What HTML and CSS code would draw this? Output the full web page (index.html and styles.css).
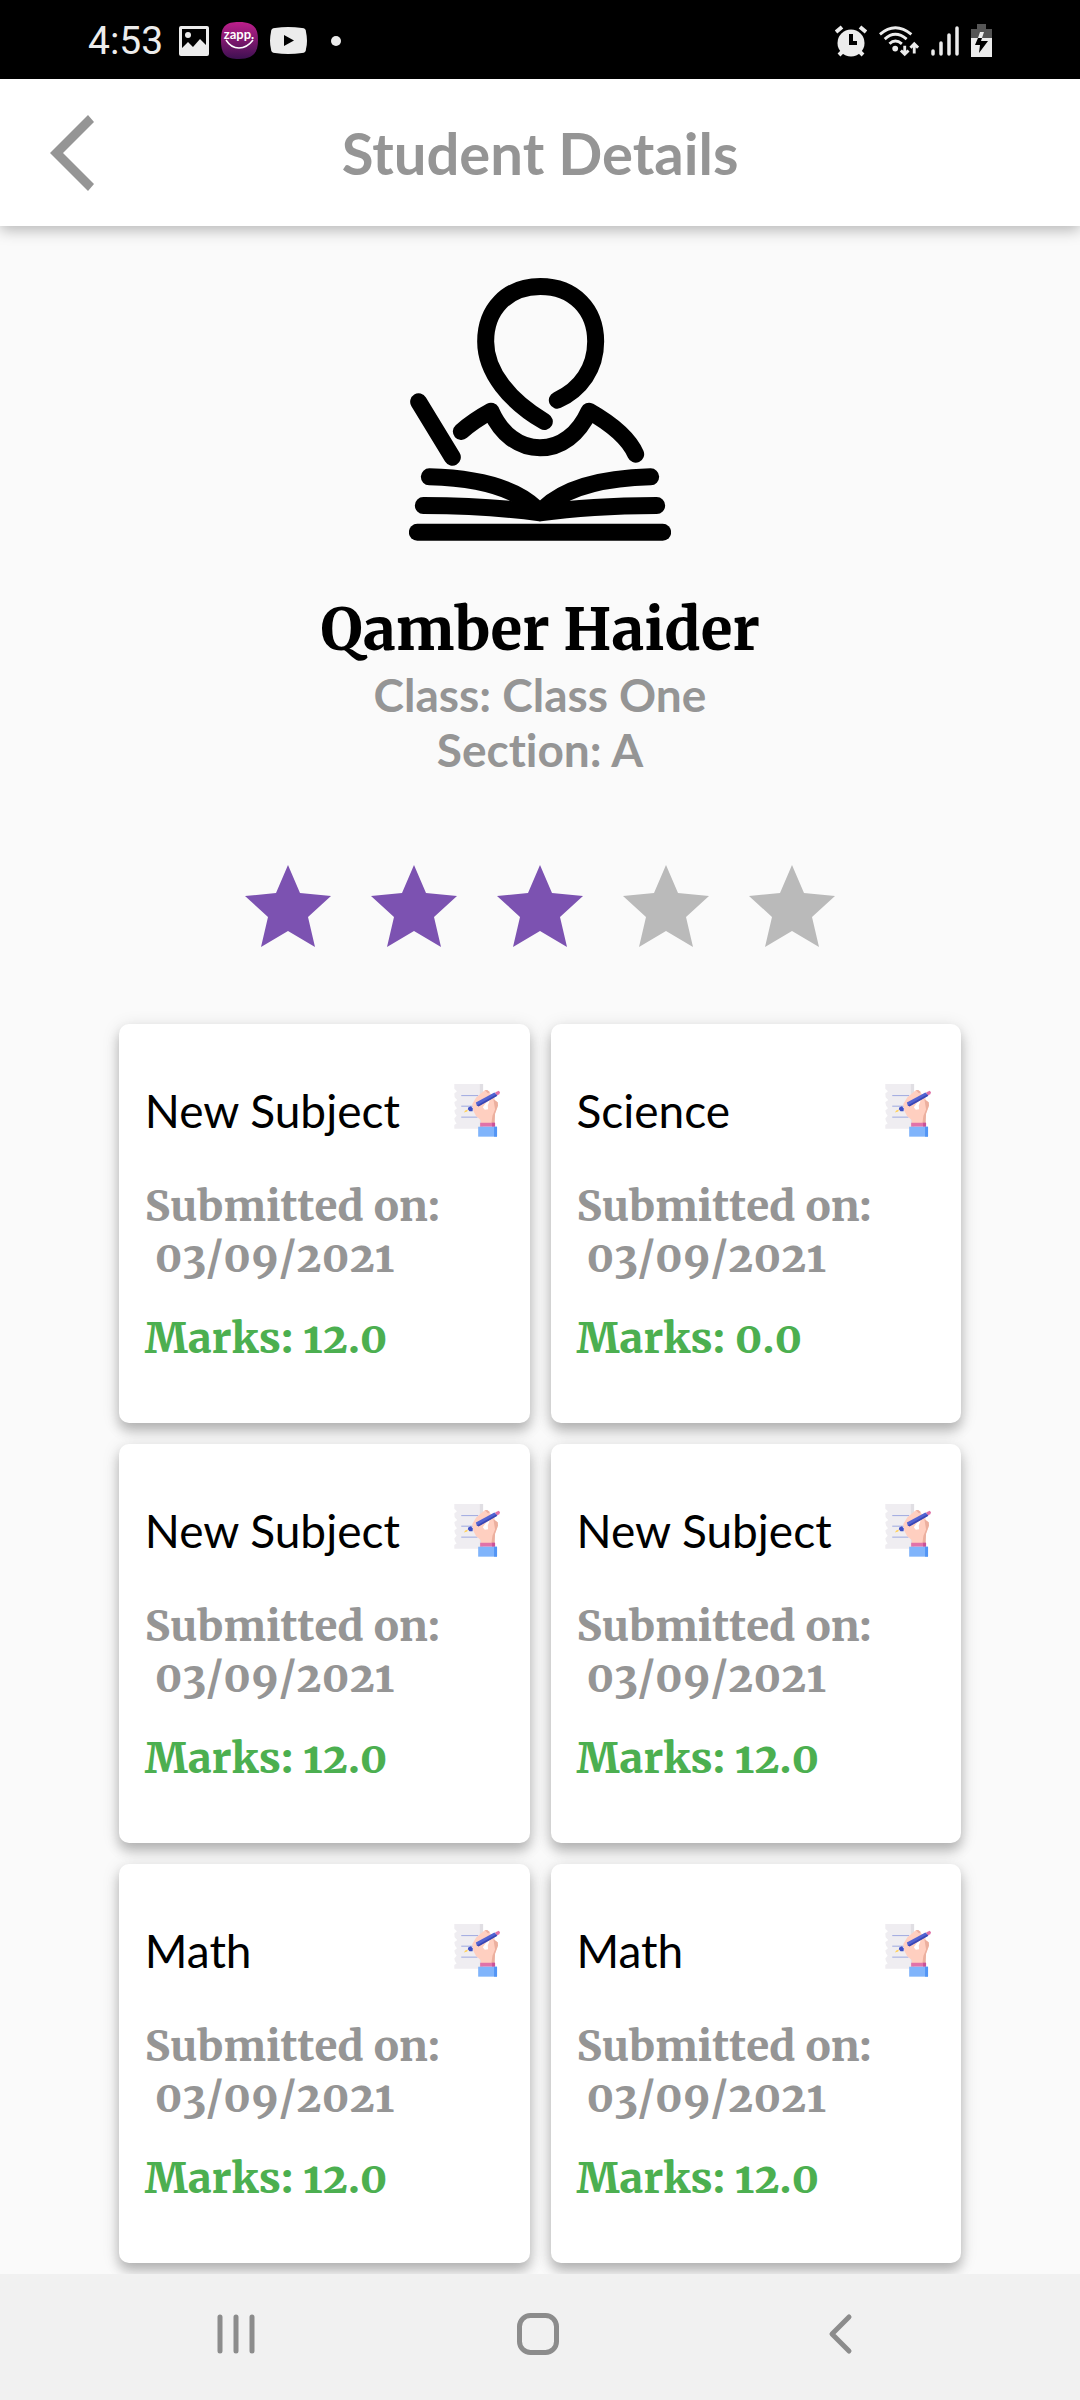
FILE: index.html
```html
<!DOCTYPE html>
<html lang="en">
<head>
<meta charset="utf-8">
<meta name="viewport" content="width=device-width, initial-scale=1">
<title>Student Details</title>
<link rel="stylesheet" href="styles.css">
</head>
<body>
<svg class="defs" width="0" height="0" aria-hidden="true">
  <symbol id="star" viewBox="0 0 86 82">
    <path d="M43 0 55 28 86 31 63 52 70 82 43 66 16 82 23 52 0 31 31 28Z"/>
  </symbol>
  <symbol id="writing" viewBox="32 42 160 160">
    <path fill="#efedf1" d="M42 42H120V177H42V166L49 161 44 154 42 146 49 138 44 130 42 122 50 115 44 107 42 97 51 90 43 82 42 71 50 64 42 56Z"/>
    <path fill="#e0dee3" d="M119 42H129V177H119Z"/>
    <path stroke="#9da8e0" stroke-width="3" d="M63 77H114M63 109H106M63 142H112"/>
    <path fill="#ffcfc0" d="M96 103 108 83 134 61 141 60 149 66 150 71 162 76 164 90 173 98 172 112 164 133 159 160H122V151L108 139 99 122Z"/>
    <path fill="#ecb09f" d="M134 61 141 60 149 66 144 71ZM160 88 173 97 174 107 165 132 164 160H154L157 138 165 119Z"/>
    <path fill="#fff" d="M137 99 149 91 143 107 144 118 134 120 128 112Z"/>
    <path fill="#5263d2" d="M107 98 163 68 171 74 172 77 115 109 110 108Z"/>
    <path fill="#3b47b3" d="M111 106 169 74 171 78 115 110Z"/>
    <path fill="#df73a8" d="M165 68 176 62 180 67 178 73 171 76Z"/>
    <path fill="#3d4fc6" d="M84 113 92 109 98 116 97 124 88 124 83 118Z"/>
    <path fill="#ffd15c" d="M71 128 75 122 83 119 81 125Z"/>
    <path fill="#e172a9" d="M120 159H165V171H120Z"/>
    <path fill="#c95298" d="M156 159H165V171H156Z"/>
    <path fill="#80b4fb" d="M114 171H171V201H114Z"/>
    <path fill="#5295f5" d="M162 171H171V201H162Z"/>
  </symbol>
</svg>

<div class="status-bar">
  <div class="status-left">
    <span class="clock">4:53</span>
    <svg class="icon-photo" viewBox="0 0 30 30" aria-hidden="true">
      <path fill="#ececec" fill-rule="evenodd" d="M2 0H28Q30 0 30 2V28Q30 30 28 30H2Q0 30 0 28V2Q0 0 2 0ZM3 3V22L9 16 14 21 21 13 27 19V3Z"/>
      <circle cx="9" cy="9" r="3" fill="#ececec"/>
    </svg>
    <svg class="icon-zapp" viewBox="0 0 37 37" aria-label="zapp" role="img">
      <defs>
        <linearGradient id="zapp-bg" x1="0" y1="0" x2="0" y2="1">
          <stop offset="0" stop-color="#bd1f8b"/>
          <stop offset="1" stop-color="#3d1051"/>
        </linearGradient>
      </defs>
      <path fill="url(#zapp-bg)" d="M18 0C32 0 37 5 37 18S32 37 18 37 0 32 0 18 5 0 18 0Z"/>
      <text class="zapp-text" x="18" y="17" text-anchor="middle">zapp.</text>
      <path fill="none" stroke="#fff" stroke-width="1.5" d="M5 18Q10 26 18 26T32 18"/>
    </svg>
    <svg class="icon-video" viewBox="0 0 37 27" aria-hidden="true">
      <path fill="#ececec" fill-rule="evenodd" d="M5 1Q18 -1 32 1 36 1 36 5 38 14 36 22 36 26 32 26 18 28 5 26 1 26 1 22-1 14 1 5 1 1 5 1ZM14 8V19L24 13.500Z"/>
    </svg>
    <span class="more-dot"></span>
  </div>
  <div class="status-right">
    <svg class="icon-alarm" viewBox="0 0 32 32" aria-hidden="true">
      <circle cx="16" cy="18" r="13.500" fill="#ececec"/>
      <path stroke="#ececec" stroke-width="4" d="M1 7 7 2M31 7 25 2M4 30 9 25M28 30 23 25"/>
      <path fill="none" stroke="#000" stroke-width="4" d="M16 9V18H22"/>
    </svg>
    <svg class="icon-wifi" viewBox="0 0 42 32" aria-hidden="true">
      <g fill="none" stroke="#ececec" stroke-width="3">
        <path d="M1 9Q17-5 34 9M6 14Q17 4 29 14M11 19Q17 13 24 19"/>
        <path d="M27 21V30M23 26 27 30 31 26M37 29V19M33 23 37 19 41 23"/>
      </g>
      <circle cx="17" cy="24" r="3" fill="#ececec"/>
    </svg>
    <svg class="icon-signal" viewBox="0 0 28 30" aria-hidden="true">
      <path stroke="#ececec" stroke-width="3.500" stroke-linecap="round" d="M2 25V28M10 17V28M18 9V28M26 2V28"/>
    </svg>
    <svg class="icon-battery" viewBox="0 0 21 33" aria-hidden="true">
      <path fill="#555" d="M6 0H15V5H21V14H0V5H6Z"/>
      <path fill="#ececec" d="M0 14H21V33H0ZM9 8H13L11 14H7Z"/>
      <path fill="#000" d="M7 14H11L10 17H17L8 29 9 21H4Z"/>
    </svg>
  </div>
</div>

<header class="app-bar">
  <button class="back" type="button" aria-label="Back">
    <svg viewBox="0 0 44 76" aria-hidden="true"><path d="M0 38 38 0 44 7 13 38 44 69 38 76Z"/></svg>
  </button>
  <h1 class="app-title">Student Details</h1>
</header>

<main class="content">
  <section class="profile">
    <svg class="avatar" viewBox="57 55 786 788" aria-hidden="true">
      <g fill="none" stroke="#000" stroke-width="51" stroke-linecap="round">
        <path d="M463 485C360 425 287 337 287 245 287 150 350 80 451 80S617 150 617 245C617 325 573 388 502 421"/>
        <path stroke-linejoin="round" d="M214 515Q250 483 303 454C334 523 387 564 450 564S566 523 597 454Q708 517 737 583"/>
        <path d="M86 426 187 592"/>
        <path d="M118 651Q346 657 439 746M782 651Q554 657 461 746"/>
        <path d="M100 737Q300 738 450 759 600 738 800 737"/>
        <path d="M82 817H818"/>
      </g>
    </svg>
    <h2 class="name">Qamber Haider</h2>
    <p class="meta">Class: Class One</p>
    <p class="meta">Section: A</p>
    <div class="rating" role="img" aria-label="3 out of 5 stars">
      <svg class="star star-on"><use href="#star"/></svg>
      <svg class="star star-on"><use href="#star"/></svg>
      <svg class="star star-on"><use href="#star"/></svg>
      <svg class="star"><use href="#star"/></svg>
      <svg class="star"><use href="#star"/></svg>
    </div>
  </section>

  <section class="cards" aria-label="Submissions">
    <article class="card">
      <div class="card-head"><h3 class="subject">New Subject</h3><svg class="card-icon" aria-hidden="true"><use href="#writing"/></svg></div>
      <p class="submitted">Submitted on:<br>&nbsp;03/09/2021</p>
      <p class="marks">Marks: 12.0</p>
    </article>
    <article class="card">
      <div class="card-head"><h3 class="subject">Science</h3><svg class="card-icon" aria-hidden="true"><use href="#writing"/></svg></div>
      <p class="submitted">Submitted on:<br>&nbsp;03/09/2021</p>
      <p class="marks">Marks: 0.0</p>
    </article>
    <article class="card">
      <div class="card-head"><h3 class="subject">New Subject</h3><svg class="card-icon" aria-hidden="true"><use href="#writing"/></svg></div>
      <p class="submitted">Submitted on:<br>&nbsp;03/09/2021</p>
      <p class="marks">Marks: 12.0</p>
    </article>
    <article class="card">
      <div class="card-head"><h3 class="subject">New Subject</h3><svg class="card-icon" aria-hidden="true"><use href="#writing"/></svg></div>
      <p class="submitted">Submitted on:<br>&nbsp;03/09/2021</p>
      <p class="marks">Marks: 12.0</p>
    </article>
    <article class="card">
      <div class="card-head"><h3 class="subject">Math</h3><svg class="card-icon" aria-hidden="true"><use href="#writing"/></svg></div>
      <p class="submitted">Submitted on:<br>&nbsp;03/09/2021</p>
      <p class="marks">Marks: 12.0</p>
    </article>
    <article class="card">
      <div class="card-head"><h3 class="subject">Math</h3><svg class="card-icon" aria-hidden="true"><use href="#writing"/></svg></div>
      <p class="submitted">Submitted on:<br>&nbsp;03/09/2021</p>
      <p class="marks">Marks: 12.0</p>
    </article>
  </section>
</main>

<nav class="system-nav" aria-label="System">
  <button class="nav-button" type="button" aria-label="Recent apps">
    <svg viewBox="0 0 42 42"><path d="M5 4V38M21 4V38M37 4V38"/></svg>
  </button>
  <button class="nav-button" type="button" aria-label="Home">
    <svg viewBox="0 0 42 42"><rect x="2.500" y="2.500" width="37" height="37" rx="11"/></svg>
  </button>
  <button class="nav-button" type="button" aria-label="Back">
    <svg viewBox="0 0 42 42"><path d="M30 4 13 21 30 38"/></svg>
  </button>
</nav>
</body>
</html>
```
FILE: styles.css
```css
* {
  box-sizing: border-box;
}

body {
  margin: 0;
  min-height: 100vh;
  display: flex;
  flex-direction: column;
  background: #fafafa;
  color: #000;
  font-family: Lato, "Open Sans", sans-serif;
  font-variant-ligatures: none;
}

h1, h2, h3, p {
  margin: 0;
}

svg {
  display: block;
  flex: none;
}

button {
  padding: 0;
  border: 0;
  background: none;
  display: flex;
  align-items: center;
  justify-content: center;
}

.defs {
  position: absolute;
}

/* Status bar */
.status-bar {
  height: 79px;
  padding: 2px 88px 0;
  display: flex;
  align-items: center;
  justify-content: space-between;
  background: #000;
  color: #ececec;
}

.status-left,
.status-right {
  display: flex;
  align-items: center;
  gap: 12px;
}

.clock {
  margin-right: 4px;
  font-family: Roboto, sans-serif;
  font-size: 39px;
  line-height: 48px;
}

.icon-photo {
  width: 30px;
  height: 30px;
}

.icon-zapp {
  width: 37px;
  height: 37px;
}

.zapp-text {
  font-family: Lato, sans-serif;
  font-size: 13px;
  font-weight: bold;
  fill: #fff;
}

.icon-video {
  width: 37px;
  height: 27px;
}

.more-dot {
  width: 10px;
  height: 10px;
  margin-left: 12px;
  border-radius: 50%;
  background: #ececec;
}

.icon-alarm {
  width: 32px;
  height: 32px;
}

.icon-wifi {
  width: 40px;
  height: 32px;
}

.icon-signal {
  width: 28px;
  height: 30px;
}

.icon-battery {
  width: 21px;
  height: 33px;
}

/* App bar */
.app-bar {
  height: 147px;
  padding: 0 50px;
  display: grid;
  grid-template-columns: 44px 1fr 44px;
  align-items: center;
  background: #fff;
  box-shadow: 0 4px 14px rgba(0, 0, 0, 0.28);
}

.back svg {
  width: 44px;
  height: 76px;
  fill: #959595;
}

.app-title {
  color: #959595;
  font-size: 58px;
  line-height: 70px;
  text-align: center;
}

/* Profile */
.content {
  flex: 1;
  padding: 52px 11% 11px;
}

.profile {
  display: flex;
  flex-direction: column;
  align-items: center;
}

.avatar {
  width: 262px;
  height: 263px;
}

.name,
.submitted,
.marks {
  font-family: Merriweather, "Liberation Serif", serif;
  font-weight: 800;
  font-kerning: none;
  font-variant-numeric: oldstyle-nums;
}

.name {
  margin: 53px 0 1px;
  font-size: 58px;
  line-height: 72px;
}

.meta {
  color: #959595;
  font-size: 46px;
  font-weight: bold;
  line-height: 55px;
}

.rating {
  margin: 88px 0 77px;
  display: flex;
  gap: 40px;
}

.star {
  width: 86px;
  height: 82px;
  fill: #bababa;
}

.star-on {
  fill: #7c52b1;
}

/* Submission cards */
.cards {
  display: grid;
  grid-template-columns: repeat(2, 1fr);
  gap: 21px;
}

.card {
  padding: 59px 26px;
  border-radius: 10px;
  background: #fff;
  box-shadow: 0 8px 12px rgba(0, 0, 0, 0.22), 0 3px 18px rgba(0, 0, 0, 0.13);
}

.card-head {
  display: flex;
  align-items: center;
  justify-content: space-between;
}

.subject {
  font-size: 46px;
  font-weight: normal;
  line-height: 55px;
}

.card-icon {
  width: 53px;
  height: 53px;
}

.submitted,
.marks {
  font-size: 42px;
  line-height: 51px;
}

.submitted {
  margin: 43px 0 30px;
  color: #959595;
}

.marks {
  color: #4caf50;
}

/* System navigation */
.system-nav {
  position: sticky;
  bottom: 0;
  height: 126px;
  padding: 0 89px 6px 85px;
  display: grid;
  grid-template-columns: repeat(3, 1fr);
  background: #f1f1f1;
}

.nav-button svg {
  width: 42px;
  height: 42px;
  fill: none;
  stroke: #8c8c8c;
  stroke-width: 5px;
  stroke-linecap: round;
  stroke-linejoin: round;
}
```
